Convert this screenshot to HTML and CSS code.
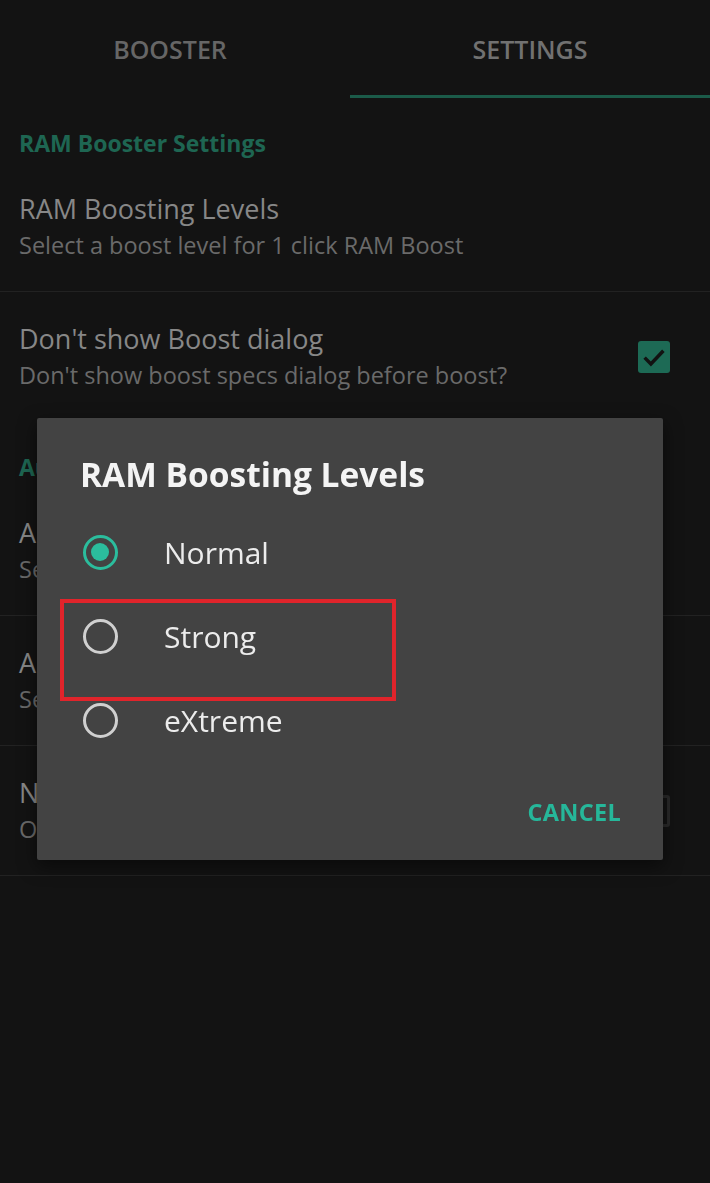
FILE: index.html
```html
<!DOCTYPE html>
<html lang="en">
<head>
    <meta charset="UTF-8">
    <meta name="viewport" content="width=device-width, initial-scale=1.0">
    <title>RAM Booster</title>
    <link rel="stylesheet" href="styles.css">
</head>
<body>
    <!-- Top tabs -->
    <div class="tabs">
        <div class="tab">BOOSTER</div>
        <div class="tab active">SETTINGS</div>
    </div>

    <!-- Settings list -->
    <div class="settings">
        <div class="category">RAM Booster Settings</div>
        <div class="pref divided">
            <div class="pref-text">
                <div class="pref-title">RAM Boosting Levels</div>
                <div class="pref-summary">Select a boost level for 1 click RAM Boost</div>
            </div>
        </div>
        <div class="pref">
            <div class="pref-text">
                <div class="pref-title">Don't show Boost dialog</div>
                <div class="pref-summary">Don't show boost specs dialog before boost?</div>
            </div>
            <div class="checkbox checked">
                <svg viewBox="0 0 24 24" width="30" height="30"><path d="M4.5 12.5l5 5L19.5 7" fill="none" stroke="#121212" stroke-width="2.8"/></svg>
            </div>
        </div>

        <div class="category">Auto Boost Settings</div>
        <div class="pref divided">
            <div class="pref-text">
                <div class="pref-title">Auto Boost Interval</div>
                <div class="pref-summary">Set how often RAM gets boosted</div>
            </div>
        </div>
        <div class="pref divided">
            <div class="pref-text">
                <div class="pref-title">Auto Boost Level</div>
                <div class="pref-summary">Select a boost level for auto boost</div>
            </div>
        </div>
        <div class="pref divided">
            <div class="pref-text">
                <div class="pref-title">Notification</div>
                <div class="pref-summary">Ongoing boost notification</div>
            </div>
            <div class="checkbox"></div>
        </div>
    </div>

    <!-- Boost level dialog -->
    <div class="dialog">
        <div class="dialog-title">RAM Boosting Levels</div>
        <div class="option">
            <span class="radio selected"></span>
            <span class="option-label">Normal</span>
        </div>
        <div class="option">
            <span class="radio"></span>
            <span class="option-label">Strong</span>
        </div>
        <div class="option">
            <span class="radio"></span>
            <span class="option-label">eXtreme</span>
        </div>
        <div class="dialog-actions">
            <button class="btn-text">CANCEL</button>
        </div>
        <div class="highlight"></div>
    </div>
</body>
</html>
```

FILE: styles.css
```css
body {
    margin: 0;
    background-color: #131313;
    font-family: 'Open Sans', 'Noto Sans', sans-serif;
    color: #8a8a8a;
}

.tabs {
    display: flex;
    height: 98px;
}

.tab {
    flex: 1;
    text-align: center;
    padding-top: 31px;
    font-size: 25px;
    font-weight: 600;
    line-height: 36px;
    color: #666;
    box-sizing: border-box;
}

.tab:first-child {
    flex: 0 0 340px;
}

.tab.active {
    color: #717171;
    border-bottom: 3px solid #1b5b49;
    margin-left: 10px;
}

.category {
    height: 64px;
    box-sizing: border-box;
    padding: 31px 19px 0;
    line-height: 28px;
    font-size: 23px;
    font-weight: 700;
    color: #1e6652;
    white-space: nowrap;
}

.pref {
    display: flex;
    align-items: center;
    height: 130px;
    box-sizing: border-box;
    padding: 0 40px 0 19px;
}

.pref.divided {
    border-bottom: 1px solid #222;
}

.pref-text {
    flex: 1;
    white-space: nowrap;
}

.pref-title {
    font-size: 27px;
    line-height: 36px;
    color: #878787;
}

.pref-summary {
    font-size: 23.5px;
    line-height: 36px;
    color: #6a6a6a;
}

.checkbox {
    width: 32px;
    height: 32px;
    box-sizing: border-box;
    border: 3px solid #2a2a2a;
    border-radius: 3px;
    display: flex;
    align-items: center;
    justify-content: center;
}

.checkbox.checked {
    background-color: #1d6a55;
    border: none;
}

/* dialog sits over the dimmed list */
.dialog {
    position: fixed;
    left: 37px;
    top: 418px;
    width: 626px;
    height: 442px;
    background-color: #434343;
    border-radius: 2px;
    box-shadow: 0 6px 18px rgba(0, 0, 0, 0.5);
    padding: 38px 42px 0 43px;
    box-sizing: border-box;
}

.dialog-title {
    font-size: 33.5px;
    font-weight: 700;
    line-height: 36px;
    color: #f4f4f4;
    margin-bottom: 18px;
    white-space: nowrap;
}

.option {
    display: flex;
    align-items: center;
    height: 84px;
    margin-left: 3px;
}

.radio {
    width: 35px;
    height: 35px;
    box-sizing: border-box;
    border: 3.5px solid #d0d0d0;
    border-radius: 50%;
    margin-right: 46px;
    position: relative;
}

.radio.selected {
    border-color: #2bbd9d;
}

.radio.selected::after {
    content: '';
    position: absolute;
    left: 5px;
    top: 5px;
    width: 18px;
    height: 18px;
    border-radius: 50%;
    background-color: #2bbd9d;
}

.option-label {
    font-size: 30px;
    color: #ececec;
}

.dialog-actions {
    display: flex;
    justify-content: flex-end;
    margin-top: 34px;
}

.btn-text {
    background: none;
    border: none;
    padding: 0;
    font-family: inherit;
    font-size: 23.5px;
    font-weight: 700;
    color: #26b79a;
    letter-spacing: 0.3px;
}

.highlight {
    position: absolute;
    left: 23px;
    top: 181px;
    width: 336px;
    height: 102px;
    box-sizing: border-box;
    border: 4px solid #e0242b;
}
```
